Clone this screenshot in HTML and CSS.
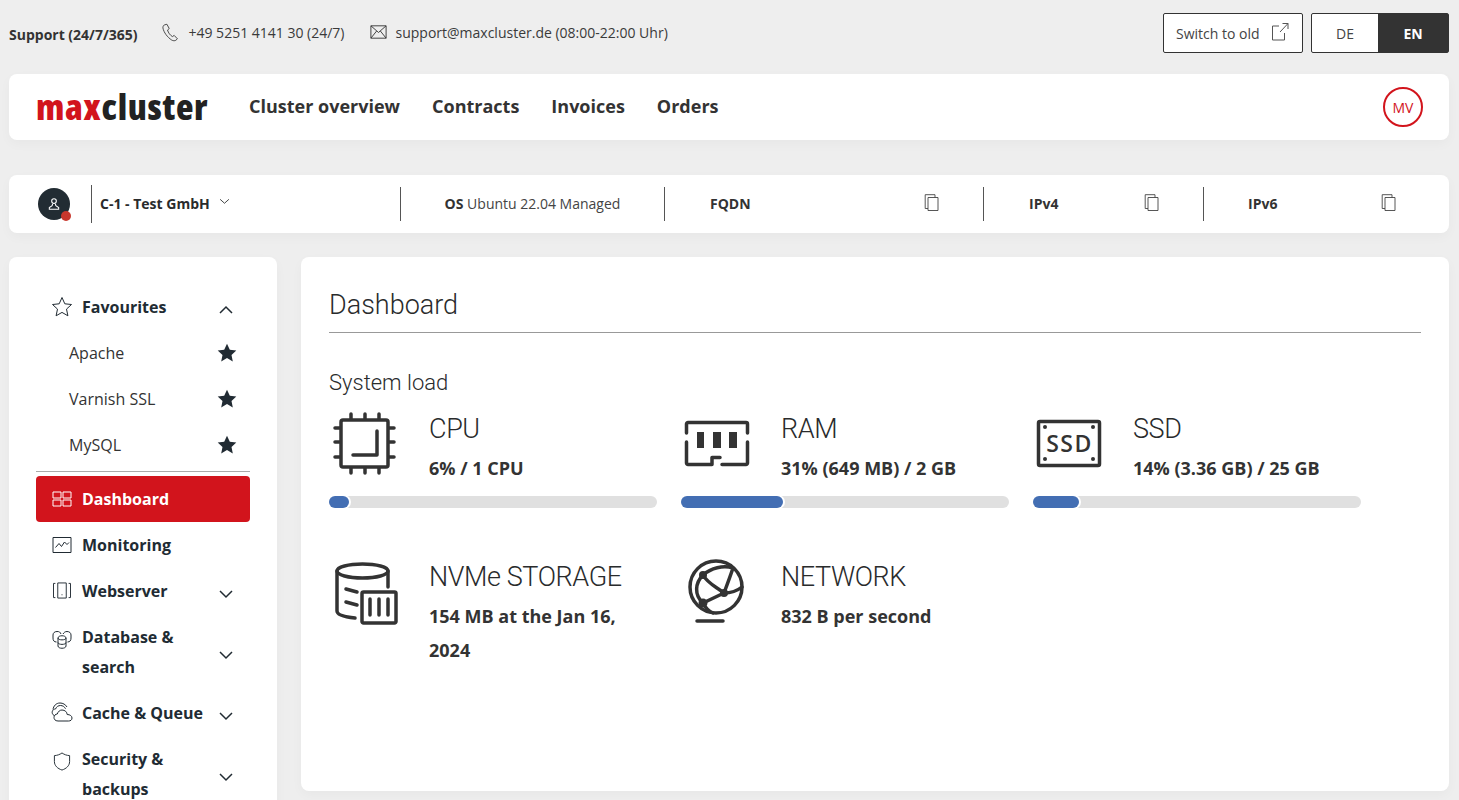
FILE: index.html
```html
<!DOCTYPE html>
<html lang="en">
<head>
<meta charset="utf-8">
<title>maxcluster Dashboard</title>
<link rel="stylesheet" href="styles.css">
</head>
<body>
<header class="topbar">
  <div class="support">
    <strong class="support-label">Support (24/7/365)</strong>
    <span class="contact">
      <svg class="contact-icon" viewBox="0 0 20 20"><path d="M3 2.200 6 1.400l2.600 4.800-1.900 1.600c.9 3.200 2.800 5.600 5.400 7.300l2-1.300 3.600 3.800-1.800 1.600c-1.300.8-3 .6-4.500-.2C6.500 15.800 2.600 10.500 1.600 5.600 1.400 4.300 2 3 3 2.200Z"/></svg>
      +49 5251 4141 30 (24/7)
    </span>
    <span class="contact">
      <svg class="contact-icon" viewBox="0 0 20 16"><path d="M2 1.500h16v13H2zM2 1.500l8 7 8-7M2 14.500l6-7.500M18 14.500l-6-7.500"/></svg>
      support@maxcluster.de (08:00-22:00 Uhr)
    </span>
  </div>
  <div class="top-actions">
    <a class="switch-btn">Switch to old
      <svg class="switch-icon" viewBox="0 0 20 20"><path d="M9 4H2.500v14h12v-7M10 10l8-8.500M12.500 1.500H18V7"/></svg>
    </a>
    <div class="lang">
      <span class="lang-item">DE</span>
      <span class="lang-item lang-active">EN</span>
    </div>
  </div>
</header>

<nav class="card mainnav">
  <div class="logo"><span class="logo-red">max</span>cluster</div>
  <ul class="nav-links">
    <li>Cluster overview</li>
    <li>Contracts</li>
    <li>Invoices</li>
    <li>Orders</li>
  </ul>
  <div class="avatar">MV</div>
</nav>

<section class="card infobar">
  <div class="info-user">
    <span class="user-dot">
      <svg class="user-icon" viewBox="0 0 12 12"><circle cx="6" cy="3.500" r="2"/><path d="M4.800 6 4.400 7.500 2 9v1.500h8V9L7.600 7.500 7.200 6"/></svg>
      <i class="user-status"></i>
    </span>
    <span class="user-name">C-1 - Test GmbH
      <svg class="user-chevron" viewBox="0 0 12 8"><path d="M1 1.500 6 6l5-4.500"/></svg>
    </span>
  </div>
  <div class="info-cell info-os"><b>OS</b> Ubuntu 22.04 Managed</div>
  <div class="info-cell info-fqdn"><b>FQDN</b>
    <svg class="copy" viewBox="0 0 14 17"><path d="M3.500 3.500h10v13h-10zM3.500 14.500H.7V.7h9.800v2.800"/></svg>
  </div>
  <div class="info-cell info-v4"><b>IPv4</b>
    <svg class="copy" viewBox="0 0 14 17"><path d="M3.500 3.500h10v13h-10zM3.500 14.500H.7V.7h9.800v2.800"/></svg>
  </div>
  <div class="info-cell info-v6"><b>IPv6</b>
    <svg class="copy" viewBox="0 0 14 17"><path d="M3.500 3.500h10v13h-10zM3.500 14.500H.7V.7h9.800v2.800"/></svg>
  </div>
</section>

<div class="content">
  <aside class="card sidebar">
    <div class="side-item">
      <svg class="side-icon" viewBox="1 1 20 20"><path d="m11 1.500 2.800 6.300 6.700.7-5 4.600 1.400 6.700-5.900-3.400-5.900 3.400 1.400-6.700-5-4.600 6.700-.7Z"/></svg>
      <span class="side-label">Favourites</span>
      <svg class="chev" viewBox="0 0 14 8"><path d="M1 7l6-6 6 6"/></svg>
    </div>
    <div class="side-sub"><span>Apache</span><svg class="fav" viewBox="0 0 20 20"><path d="m10 .8 2.800 6 6.500.7-4.800 4.400 1.300 6.500-5.800-3.300-5.800 3.300 1.300-6.500L.7 7.500l6.500-.7Z"/></svg></div>
    <div class="side-sub"><span>Varnish SSL</span><svg class="fav" viewBox="0 0 20 20"><path d="m10 .8 2.800 6 6.500.7-4.800 4.400 1.300 6.500-5.800-3.300-5.800 3.300 1.300-6.500L.7 7.500l6.500-.7Z"/></svg></div>
    <div class="side-sub"><span>MySQL</span><svg class="fav" viewBox="0 0 20 20"><path d="m10 .8 2.800 6 6.500.7-4.800 4.400 1.300 6.500-5.800-3.300-5.800 3.300 1.300-6.500L.7 7.500l6.500-.7Z"/></svg></div>
    <hr class="side-rule">
    <div class="side-item side-active">
      <svg class="side-icon" viewBox="0 0 20 16"><path d="M1 1h8v6H1zM11 1h8v6h-8zM1 9h8v6H1zM11 9h8v6h-8z"/></svg>
      <span class="side-label">Dashboard</span>
    </div>
    <div class="side-item">
      <svg class="side-icon" viewBox="0 0 20 17"><path d="M1 1h18v15H1zM3.500 11l3.500-4 2.500 3 3-4.500 2.500 2.500 2-2"/></svg>
      <span class="side-label">Monitoring</span>
    </div>
    <div class="side-item">
      <svg class="side-icon side-icon-web" viewBox="0 0 20 18"><path d="M5.500 1h9v16h-9zM3 1.500H1v15h2M17 1.500h2v15h-2M9.500 13.500h1"/></svg>
      <span class="side-label">Webserver</span>
      <svg class="chev" viewBox="0 0 14 8"><path d="M1 1l6 6 6-6"/></svg>
    </div>
    <div class="side-item">
      <svg class="side-icon side-icon-low" viewBox="0 0 20 19"><path d="M4.500 12C2 12 1 10.500 1 8V5c0-2 1.500-3.500 4-3.500S8 2 9 4M11 4c1-1.500 2-2.500 4-2.500 2.500 0 4 1.500 4 3.500v3c0 2.500-1 4-3.500 4M6 8c0-3 8-3 8 0v8c0 3-8 3-8 0ZM6 8c0 2.500 8 2.500 8 0M6 12.500c0 2.500 8 2.500 8 0"/></svg>
      <span class="side-label">Database &amp; search</span>
      <svg class="chev" viewBox="0 0 14 8"><path d="M1 1l6 6 6-6"/></svg>
    </div>
    <div class="side-item">
      <svg class="side-icon side-icon-wide" viewBox="0 0 22 20"><path d="M7 19c-3 0-4-2-4-3.500 0-2 1.500-3.500 3.300-3.500C7 9.500 9 8 11 8c3 0 5 2 5.200 4.500 2.800 0 4.800 1.500 4.800 3.500s-1.500 3-3.500 3ZM3 13.500C1.500 12.500 1 11 1.200 9.800 1.500 8 3 7 4.500 7 5.500 4.500 7.500 3.500 9.500 3.500c2.200 0 4 1.200 5 3.200M2 7.500C2.500 4 5 1 9 1c3 0 5.500 1.500 7 4"/></svg>
      <span class="side-label">Cache &amp; Queue</span>
      <svg class="chev" viewBox="0 0 14 8"><path d="M1 1l6 6 6-6"/></svg>
    </div>
    <div class="side-item">
      <svg class="side-icon side-icon-low" viewBox="0 0 20 20"><path d="M10 1c2.500 1.800 5 2.600 8 2.800V10c0 4.500-3.500 7.500-8 9-4.500-1.500-8-4.500-8-9V3.800C5 3.600 7.500 2.800 10 1Z"/></svg>
      <span class="side-label">Security &amp; backups</span>
      <svg class="chev" viewBox="0 0 14 8"><path d="M1 1l6 6 6-6"/></svg>
    </div>
  </aside>

  <main class="card panel">
    <h1 class="panel-title">Dashboard</h1>
    <h2 class="panel-sub">System load</h2>
    <div class="metrics">
      <article class="metric">
        <div class="metric-head">
          <svg class="metric-icon" viewBox="0 0 66 60"><path d="M10 7h43a2 2 0 0 1 2 2v43a2 2 0 0 1-2 2H10a2 2 0 0 1-2-2V9a2 2 0 0 1 2-2ZM18 1v6M32 1v6M46 1v6M18 54v6M32 54v6M46 54v6M2 15h6M2 29h6M2 44h6M55 15h6M55 29h6M55 44h6M44 18v24H20"/></svg>
          <div>
            <h3 class="metric-name">CPU</h3>
            <p class="metric-value">6% / 1 CPU</p>
          </div>
        </div>
        <div class="bar"><div class="bar-fill" style="width:6%"></div></div>
      </article>
      <article class="metric">
        <div class="metric-head">
          <svg class="metric-icon" viewBox="0 0 66 60"><path d="M1.500 20V11a1.500 1.500 0 0 1 1.500-1.500h58a1.500 1.500 0 0 1 1.500 1.500v9M1.500 29v21a1.500 1.500 0 0 0 1.500 1.500h24v-7h8M37 51.500h24a1.500 1.500 0 0 0 1.500-1.500V29"/><path class="metric-solid" d="M12 19h7v16h-7zM28 19h8v16h-8zM44 19h8v16h-8z"/></svg>
          <div>
            <h3 class="metric-name">RAM</h3>
            <p class="metric-value">31% (649 MB) / 2 GB</p>
          </div>
        </div>
        <div class="bar"><div class="bar-fill" style="width:31%"></div></div>
      </article>
      <article class="metric">
        <div class="metric-head">
          <svg class="metric-icon" viewBox="0 0 66 60"><rect x="1.500" y="8.500" width="61" height="44" rx="1.500"/><circle class="metric-solid" cx="8" cy="14" r="2"/><circle class="metric-solid" cx="56" cy="14" r="2"/><circle class="metric-solid" cx="8" cy="46" r="2"/><circle class="metric-solid" cx="56" cy="46" r="2"/><text class="ssd-text" x="32.500" y="39">SSD</text></svg>
          <div>
            <h3 class="metric-name">SSD</h3>
            <p class="metric-value">14% (3.36 GB) / 25 GB</p>
          </div>
        </div>
        <div class="bar"><div class="bar-fill" style="width:14%"></div></div>
      </article>
      <article class="metric">
        <div class="metric-head">
          <svg class="metric-icon" viewBox="0 0 66 60"><ellipse cx="29.500" cy="10" rx="25.500" ry="7"/><path d="M4 10v40c0 4 8 6 18 7M55 10v16M13 28l11 3M13 41l11 3"/><path d="M30.500 31h31a1.500 1.500 0 0 1 1.500 1.500v28a1.500 1.500 0 0 1-1.500 1.500h-31a1.500 1.500 0 0 1-1.500-1.500v-28a1.500 1.500 0 0 1 1.500-1.500ZM37 38v16M46 38v16M55 38v16"/></svg>
          <div>
            <h3 class="metric-name">NVMe STORAGE</h3>
            <p class="metric-value">154 MB at the Jan 16, 2024</p>
          </div>
        </div>
      </article>
      <article class="metric">
        <div class="metric-head">
          <svg class="metric-icon" viewBox="0 0 66 60"><circle cx="31" cy="26" r="26"/><path d="M18 14c5 9 14 12 21 18M18 14c8-7 20-10 30-7M39 32c3-8 6-16 9-25M39 32 18 42M39 32c7 0 13-2 18-6M18 14C10 22 9 34 18 42M18 42c2 4 5 8 10 10M12 60h26"/><circle class="metric-solid" cx="18" cy="14" r="4"/><circle class="metric-solid" cx="39" cy="32" r="4"/><circle class="metric-solid" cx="18" cy="42" r="4.500"/></svg>
          <div>
            <h3 class="metric-name">NETWORK</h3>
            <p class="metric-value">832 B per second</p>
          </div>
        </div>
      </article>
    </div>
  </main>
</div>
</body>
</html>
```

FILE: styles.css
```css
* { box-sizing: border-box; }
html, body { margin: 0; height: 800px; overflow: hidden; }
body {
  background: #eeeeee;
  color: #292b2c;
  font-family: "Open Sans", "Liberation Sans", sans-serif;
  font-size: 16px;
  padding: 0 10px 0 9px;
}
svg { fill: none; stroke: currentColor; display: block; flex: none; overflow: visible; }
.card { background: #fff; border-radius: 8px; box-shadow: 0 4px 12px rgba(0,0,0,.03); }

.topbar { height: 74px; display: flex; justify-content: space-between; align-items: flex-start; }
.support { display: flex; align-items: center; height: 66px; font-size: 14px; color: #3a3a3a; }
.support-label { font-weight: 700; font-size: 14px; margin-right: 24px; margin-top: 2px; color: #333; }
.contact { display: flex; align-items: center; margin-right: 24px; gap: 8px; position: relative; top: -1px; }
.contact-icon { width: 19px; height: 18px; stroke-width: 1; }
.top-actions { display: flex; gap: 8px; padding-top: 13px; }
.switch-btn { width: 140px; height: 40px; border: 1px solid #333; border-radius: 2px; background: #fff; display: flex; align-items: center; gap: 10px; padding-left: 12px; font-size: 14px; color: #444; }
.switch-icon { width: 20px; height: 20px; stroke-width: 1; margin-top: -3px; stroke: #555; }
.lang { display: flex; width: 138px; height: 40px; border: 1px solid #333; border-radius: 2px; background: #fff; font-size: 14px; }
.lang-item { flex: 1; display: flex; align-items: center; justify-content: center; color: #444; }
.lang-active { flex: 0 0 70px; background: #333; color: #fff; font-weight: 700; }

.mainnav { height: 66px; display: flex; align-items: center; padding: 0 26px 0 27px; }
.logo { width: 213px; font-weight: 800; font-stretch: 75%; font-size: 36px; line-height: 1; letter-spacing: .7px; color: #222; }
.logo-red { color: #d2141c; }
.nav-links { display: flex; gap: 32px; list-style: none; margin: 0; padding: 0 0 2px; flex: 1; font-size: 18px; font-weight: 700; color: #333; }
.avatar { width: 40px; height: 40px; border: 2px solid #d2141c; border-radius: 50%; display: flex; align-items: center; justify-content: center; color: #d2141c; font-size: 14px; }

.infobar { height: 58px; margin-top: 35px; display: flex; align-items: center; font-size: 14px; }
.info-user { width: 391px; display: flex; align-items: center; padding-left: 29px; }
.user-dot { width: 32px; height: 32px; border-radius: 50%; background: #222c33; color: #fff; position: relative; display: flex; align-items: center; justify-content: center; margin-right: 21px; }
.user-icon { width: 14px; height: 14px; stroke-width: .9; }
.user-status { position: absolute; right: -1px; bottom: -1px; width: 10px; height: 10px; border-radius: 50%; background: #c8372d; }
.user-name { border-left: 1px solid #555; height: 38px; display: flex; align-items: center; gap: 9px; padding: 0 0 2px 8px; font-weight: 700; font-size: 14px; }
.user-chevron { width: 11px; height: 7px; stroke-width: 1; margin-top: -4px; }
.info-cell { height: 34px; border-left: 1px solid #555; display: flex; align-items: center; color: #444; padding-bottom: 2px; }
.info-cell b { color: #333; font-weight: 700; }
.info-os { width: 264px; justify-content: center; white-space: pre; }
.info-fqdn { width: 319px; padding-left: 45px; padding-right: 44px; justify-content: space-between; }
.info-v4 { width: 220px; padding-left: 45px; padding-right: 44px; justify-content: space-between; }
.info-v6 { width: 218px; padding-left: 44px; padding-right: 25px; justify-content: space-between; }
.copy { width: 15px; height: 17px; stroke-width: .9; margin-top: -1px; }

.content { display: flex; gap: 24px; margin-top: 24px; align-items: flex-start; }
.sidebar { width: 268px; height: 600px; padding: 27px 27px 0; flex: none; font-size: 16px; }
.side-item { display: flex; align-items: center; padding: 8px 0 8px 16px; line-height: 30px; color: #212b33; border-radius: 4px; }
.side-icon { width: 20px; height: 20px; stroke-width: 1; margin-right: 10px; align-self: flex-start; margin-top: 5px; }
.side-icon-wide { width: 22px; margin-left: -1px; margin-right: 9px; margin-top: 4px; }
.side-icon-web { margin-top: 6px; height: 17px; }
.side-icon-low { margin-top: 8px; height: 19px; }
.side-label { flex: 1; font-weight: 700; }
.chev { width: 14px; height: 8px; stroke-width: 1.500; margin-right: 17px; margin-top: 5px; }
.side-sub { display: flex; align-items: center; justify-content: space-between; height: 46px; padding: 0 13px 0 33px; color: #333; }
.fav { width: 20px; height: 20px; fill: #212b33; stroke: none; }
.side-rule { border: 0; border-top: 1px solid #aaa; margin: 3px 0 4px; }
.side-active { background: #d2141c; color: #fff; }

.panel { flex: 1; height: 534px; padding: 28px; }
.panel-title { margin: 0; height: 48px; border-bottom: 1px solid #999; font-family: Roboto, "Open Sans", sans-serif; font-weight: 300; font-size: 27px; line-height: 40px; color: #292b2c; }
.panel-sub { margin: 34px 0 0; font-family: Roboto, "Open Sans", sans-serif; font-weight: 300; font-size: 22px; line-height: 32px; color: #292b2c; }
.metrics { display: grid; grid-template-columns: repeat(3, 328px); column-gap: 24px; }
.metric { height: 148px; }
.metric-head { display: flex; height: 97px; padding-top: 12px; }
.metric-icon { width: 66px; height: 60px; margin: 2px 30px 0 4px; stroke: #333; stroke-width: 3.500; stroke-linecap: round; stroke-linejoin: round; }
.metric-solid { fill: #333; stroke: none; }
.ssd-text { font-family: "Open Sans", sans-serif; font-weight: 600; font-size: 23px; letter-spacing: 1.500px; text-anchor: middle; fill: #333; stroke: none; }
.metric-name { margin: 0; font-family: Roboto, "Open Sans", sans-serif; font-weight: 300; font-size: 27px; letter-spacing: -.4px; line-height: 36px; color: #292b2c; }
.metric-value { margin: 4px 0 0; font-weight: 700; font-size: 18px; line-height: 34px; color: #333; max-width: 210px; }
.bar { height: 12px; border-radius: 6px; background: #e0e0e0; }
.bar-fill { height: 12px; border-radius: 6px; background: #436eb3; box-shadow: 1px 0 0 1px #fff; }
```
